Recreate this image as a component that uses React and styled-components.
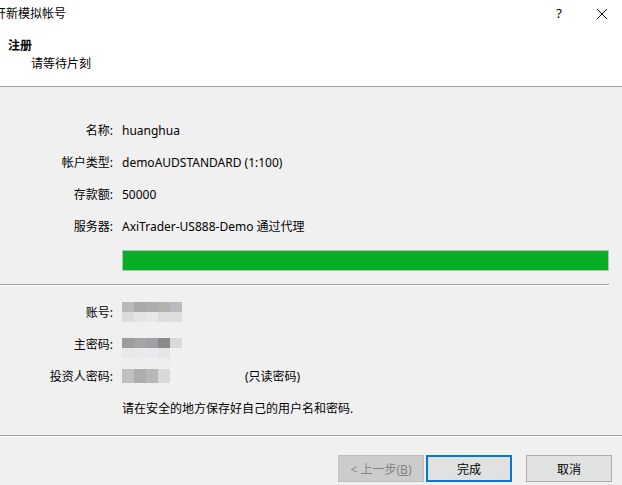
import React from "react";
import styled, { createGlobalStyle } from "styled-components";

const GlobalStyle = createGlobalStyle`
  html, body {
    margin: 0;
    padding: 0;
    background: #ffffff;
  }
  body {
    font-family: "Noto Sans", "Noto Sans CJK SC", sans-serif;
    font-size: 12px;
    color: #000000;
  }
`;

const infoRows = [
  { label: "名称:", value: "huanghua" },
  { label: "帐户类型:", value: "demoAUDSTANDARD (1:100)" },
  { label: "存款额:", value: "50000" },
  { label: "服务器:", value: "AxiTrader-US888-Demo 通过代理" },
];

// pixelated (blurred) secrets
const accountMosaic = [
  ["#b9b9b9", "#a9a9a9", "#adadad", "#b5b1ae", "#b9bbc1"],
  ["#dcdcdc", "#e4e4e4", "#e8e8e8", "#e0dcdd", "#dddee1"],
];
const masterMosaic = [
  ["#a19b97", "#a5a5a6", "#9da1a5", "#8d898a", "#d9d9d9"],
  ["#e8e8e8", "#ebeae9", "#e9eaee", "#e6e6e6", "#f0f0f0"],
  ["#eeeeee", "#ededed", "#efefef", "#ededed", "#f0f0f0"],
];
const investorMosaic = [
  ["#c1c1c1", "#adadad", "#b8b8b8", "#d9d9d9", "#f0f0f0"],
];

function Mosaic({ cells, cellW = 12, cellH = 10, drop = 0 }) {
  const w = cells[0].length * cellW;
  const h = cells.length * cellH;
  return (
    <MosaicSvg $drop={drop} width={w} height={h} viewBox={`0 0 ${w} ${h}`}>
      {cells.map((row, r) =>
        row.map((c, i) => (
          <rect key={`${r}-${i}`} x={i * cellW} y={r * cellH} width={cellW} height={cellH} fill={c} />
        ))
      )}
    </MosaicSvg>
  );
}

export default function App() {
  return (
    <Window>
      <GlobalStyle />
      <Header>
        <TitleBar>
          <Caption>开新模拟帐号</Caption>
          <TitleButtons>
            <HelpMark>?</HelpMark>
            <svg width="12" height="12" viewBox="0 0 12 12">
              <path d="M1 1 L11 11 M11 1 L1 11" stroke="#111" strokeWidth="1" fill="none" />
            </svg>
          </TitleButtons>
        </TitleBar>
        <HeaderTitle>注册</HeaderTitle>
        <HeaderSub>请等待片刻</HeaderSub>
      </Header>

      <Body>
        <FormGrid>
          {infoRows.map((row) => (
            <Row key={row.label}>
              <Label>{row.label}</Label>
              <Value>{row.value}</Value>
            </Row>
          ))}
        </FormGrid>

        <ProgressRow>
          <Progress>
            <ProgressFill style={{ width: "100%" }} />
          </Progress>
        </ProgressRow>

        <Etched />

        <FormGrid $top={11}>
          <Row>
            <Label>账号:</Label>
            <Value>
              <Mosaic cells={accountMosaic} />
            </Value>
          </Row>
          <Row>
            <Label>主密码:</Label>
            <Value>
              <Mosaic cells={masterMosaic} drop={9} />
            </Value>
          </Row>
          <Row>
            <Label>投资人密码:</Label>
            <Value>
              <Mosaic cells={investorMosaic} cellW={12} cellH={14} />
              <ReadOnlyNote>(只读密码)</ReadOnlyNote>
            </Value>
          </Row>
          <Row>
            <Label />
            <Value>请在安全的地方保存好自己的用户名和密码.</Value>
          </Row>
        </FormGrid>
      </Body>

      <Footer>
        <Button disabled>
          &lt; 上一步(<u>B</u>)
        </Button>
        <Button $primary>完成</Button>
        <Button $gap={14}>取消</Button>
      </Footer>
    </Window>
  );
}

const Window = styled.div`
  width: 622px;
  height: 485px;
  overflow: hidden;
  background: #f0f0f0;
  display: flex;
  flex-direction: column;
`;

const Header = styled.div`
  background: #ffffff;
  border-bottom: 1px solid #a0a0a0;
  box-sizing: border-box;
  height: 87px;
`;

const TitleBar = styled.div`
  height: 27px;
  display: flex;
  align-items: center;
  justify-content: space-between;
`;

const Caption = styled.div`
  margin-left: -6px;
  line-height: 1;
`;

const TitleButtons = styled.div`
  display: flex;
  align-items: center;
  gap: 34px;
  margin-right: 14px;
`;

const HelpMark = styled.span`
  font-size: 13px;
  line-height: 1;
`;

const HeaderTitle = styled.div`
  font-weight: bold;
  margin: 10px 0 0 8px;
  line-height: 18px;
`;

const HeaderSub = styled.div`
  margin-left: 31px;
  line-height: 18px;
`;

const Body = styled.div`
  flex: 1;
  padding-top: 27px;
  border-bottom: 1px solid #a0a0a0;
  box-shadow: 0 1px 0 #ffffff;
`;

const FormGrid = styled.div`
  display: flex;
  flex-direction: column;
  margin-top: ${(p) => p.$top || 0}px;
`;

const Row = styled.div`
  display: grid;
  grid-template-columns: 113px 1fr;
  grid-template-rows: 32px;
  column-gap: 9px;
  align-items: center;
  height: 32px;
`;

const Label = styled.div`
  text-align: right;
  color: #000;
`;

const Value = styled.div`
  display: flex;
  align-items: center;
  white-space: nowrap;
`;

const MosaicSvg = styled.svg`
  display: block;
  flex: none;
  margin-top: ${(p) => p.$drop}px;
  margin-bottom: ${(p) => -p.$drop}px;
`;

const ReadOnlyNote = styled.span`
  margin-left: 63px;
`;

const ProgressRow = styled.div`
  padding: 8px 13px 0 122px;
`;

const Progress = styled.div`
  height: 21px;
  border: 1px solid #bcbcbc;
  box-sizing: border-box;
  background: #e6e6e6;
`;

const ProgressFill = styled.div`
  height: 100%;
  background: #06ae25;
`;

const Etched = styled.div`
  margin: 13px 13px 0 0;
  height: 1px;
  background: #a0a0a0;
  box-shadow: 0 1px 0 #ffffff;
`;

const Footer = styled.div`
  height: 49px;
  display: flex;
  align-items: flex-start;
  justify-content: flex-end;
  padding: 19px 10px 0 0;
  box-sizing: border-box;
`;

const Button = styled.button`
  width: 86px;
  height: 27px;
  margin-left: ${(p) => (p.$gap ? p.$gap : 2)}px;
  font-family: "Noto Sans", "Noto Sans CJK SC", sans-serif;
  font-size: 12px;
  color: #000;
  background: #e1e1e1;
  border: 1px solid #adadad;
  box-sizing: border-box;
  padding: 0;
  border-radius: 0;
  ${(p) => p.$primary && `border: 2px solid #0078d7;`}
  &:disabled {
    background: #cccccc;
    border-color: #bfbfbf;
    color: #838383;
  }
`;
